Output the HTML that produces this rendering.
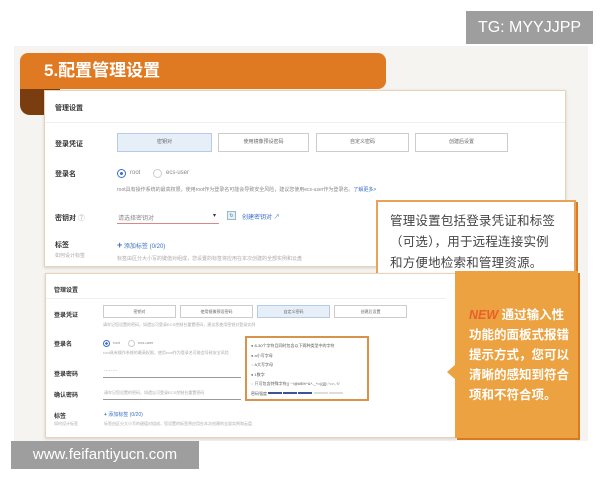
<!DOCTYPE html><html><head><meta charset="utf-8"><style>
*{margin:0;padding:0;box-sizing:border-box}
body{width:600px;height:480px;background:#fff;position:relative;overflow:hidden;font-family:"Liberation Sans","Noto Sans CJK SC",sans-serif;color:#333}
.a{position:absolute;white-space:nowrap}
.s{font-size:6px;color:#888}
.l{font-size:7px;font-weight:bold;color:#333}
.btn{position:absolute;border:1px solid #ccc;background:#fff;font-size:5px;color:#666;text-align:center}
.btn.on{background:#e6eef8;border-color:#b8cbe4}
</style></head><body>
<div class="a" style="left:466px;top:11px;width:127px;height:33px;background:#9e9e9e;color:#fff;font-size:16px;line-height:33px;text-align:center">TG: MYYJJPP</div>
<div class="a" style="left:14px;top:46px;width:574px;height:395px;background:#f6f4f1"></div>
<div class="a" style="left:20px;top:88px;width:40px;height:27px;background:#7a3d10;border-radius:0 0 0 10px"></div>
<div class="a" style="left:20px;top:53px;width:366px;height:36px;background:#e07a22;border-radius:8px 8px 8px 0;color:#fff;font-size:17px;font-weight:bold;line-height:36px;padding-left:24px">5.配置管理设置</div>
<!-- card 1 -->
<div class="a" style="left:44px;top:90px;width:522px;height:177px;background:#fff;border:1px solid #e8d3b8;box-shadow:0 1px 3px rgba(0,0,0,.15)"></div>
<div class="a l" style="left:55px;top:103px">管理设置</div>
<div class="a" style="left:45px;top:122px;width:520px;height:1px;background:#eee"></div>
<div class="a l" style="left:55px;top:139px">登录凭证</div>
<div class="btn on" style="left:117px;top:133px;width:95px;height:19px;line-height:17px">密钥对</div>
<div class="btn" style="left:218px;top:133px;width:91px;height:19px;line-height:17px">使用镜像预设密码</div>
<div class="btn" style="left:316px;top:133px;width:93px;height:19px;line-height:17px">自定义密码</div>
<div class="btn" style="left:415px;top:133px;width:93px;height:19px;line-height:17px">创建后设置</div>
<div class="a l" style="left:55px;top:169px">登录名</div>
<div class="a" style="left:117px;top:169px;width:9px;height:9px;border:1px solid #3a6fc4;border-radius:50%"><div style="margin:2px;width:3px;height:3px;border-radius:50%;background:#3a6fc4"></div></div>
<div class="a s" style="left:130px;top:170px">root</div>
<div class="a" style="left:153px;top:169px;width:9px;height:9px;border:1px solid #ccc;border-radius:50%"></div>
<div class="a s" style="left:166px;top:170px">ecs-user</div>
<div class="a s" style="left:117px;top:186px;font-size:5px">root具有操作系统的最高权限，使用root作为登录名可能会导致安全风险，建议您使用ecs-user作为登录名。<span style="color:#3a6fc4">了解更多&gt;</span></div>
<div class="a l" style="left:55px;top:213px">密钥对 <span style="color:#aaa;font-weight:normal">⑦</span></div>
<div class="a s" style="left:118px;top:213px">请选择密钥对</div>
<div class="a" style="left:117px;top:223px;width:102px;height:1px;background:#d88"></div>
<div class="a" style="left:213px;top:212px;font-size:6px">▾</div>
<div class="a" style="left:227px;top:211px;width:9px;height:9px;background:#e6eef8;border:1px solid #9bb;font-size:5px;color:#3a6fc4;text-align:center;line-height:8px">↻</div>
<div class="a s" style="left:242px;top:212px;color:#3a6fc4">创建密钥对 ↗</div>
<div class="a l" style="left:55px;top:240px">标签</div>
<div class="a s" style="left:55px;top:252px;font-size:5px;color:#aaa">如何设计标签</div>
<div class="a s" style="left:117px;top:240px;color:#3a6fc4"><b style="font-size:9px">+</b> 添加标签 (0/20)</div>
<div class="a s" style="left:117px;top:255px;font-size:5px;color:#aaa">标签由区分大小写的键值对组成，您设置的标签将应用在本次创建的全部实例和云盘</div>
<!-- callout 1 -->
<div class="a" style="left:376px;top:200px;width:200px;height:75px;background:#fff;border:2px solid #e9a25a;box-shadow:2px 2px 0 #e07a22"></div>
<div class="a" style="left:390px;top:211px;font-size:12.5px;line-height:21px;color:#444;letter-spacing:.2px">管理设置包括登录凭证和标签<br>（可选），用于远程连接实例<br>和方便地检索和管理资源。</div>
<!-- card 2 -->
<div class="a" style="left:45px;top:273px;width:412px;height:165px;background:#fff;border:1px solid #e8d3b8;box-shadow:0 1px 3px rgba(0,0,0,.15)"></div>
<div class="a l" style="left:54px;top:285px;font-size:6px">管理设置</div>
<div class="a" style="left:46px;top:298px;width:400px;height:1px;background:#eee"></div>
<div class="a l" style="left:54px;top:310px;font-size:6px">登录凭证</div>
<div class="btn" style="left:103px;top:305px;width:73px;height:13px;line-height:11px;font-size:4px">密钥对</div>
<div class="btn" style="left:180px;top:305px;width:73px;height:13px;line-height:11px;font-size:4px">使用镜像预设密码</div>
<div class="btn on" style="left:257px;top:305px;width:73px;height:13px;line-height:11px;font-size:4px">自定义密码</div>
<div class="btn" style="left:334px;top:305px;width:73px;height:13px;line-height:11px;font-size:4px">创建后设置</div>
<div class="a s" style="left:103px;top:322px;font-size:4px;color:#aaa">请牢记您设置的密码，如遗忘可登录ECS控制台重置密码，建议您使用密钥对登录实例</div>
<div class="a l" style="left:54px;top:339px;font-size:6px">登录名</div>
<div class="a" style="left:103px;top:340px;width:7px;height:7px;border:1px solid #3a6fc4;border-radius:50%;background:radial-gradient(#3a6fc4 35%,#fff 40%)"></div>
<div class="a s" style="left:113px;top:340px;font-size:4px">root</div>
<div class="a" style="left:128px;top:340px;width:7px;height:7px;border:1px solid #ccc;border-radius:50%"></div>
<div class="a s" style="left:138px;top:340px;font-size:4px">ecs-user</div>
<div class="a s" style="left:103px;top:350px;font-size:4px;color:#aaa">root具有操作系统的最高权限，使用root作为登录名可能会导致安全风险</div>
<div class="a l" style="left:54px;top:369px;font-size:6px">登录密码</div>
<div class="a s" style="left:104px;top:368px;font-size:5px">········</div>
<div class="a" style="left:103px;top:377px;width:138px;height:1px;background:#999"></div>
<div class="a l" style="left:54px;top:390px;font-size:6px">确认密码</div>
<div class="a s" style="left:104px;top:390px;font-size:4px;color:#aaa">请牢记您设置的密码，如遗忘可登录ECS控制台重置密码</div>
<div class="a" style="left:103px;top:399px;width:138px;height:1px;background:#999"></div>
<div class="a l" style="left:54px;top:411px;font-size:6px">标签</div>
<div class="a s" style="left:54px;top:421px;font-size:4px;color:#aaa">如何设计标签</div>
<div class="a s" style="left:104px;top:411px;font-size:5px;color:#3a6fc4"><b>+</b> 添加标签 (0/20)</div>
<div class="a s" style="left:104px;top:421px;font-size:4px;color:#aaa">标签由区分大小写的键值对组成，您设置的标签将应用在本次创建的全部实例和云盘</div>
<!-- tooltip -->
<div class="a" style="left:245px;top:336px;width:124px;height:65px;background:#fff;border:2px solid #d9924a;font-size:4px;color:#555;line-height:9.5px;padding:3px 4px">
<div><span style="color:#4a8a3a">●</span> 8-30个字符且同时包含以下两种类型中的字符</div>
<div><span style="color:#4a8a3a">●</span> a小写字母</div>
<div><span style="color:#aaa">○</span> A大写字母</div>
<div><span style="color:#4a8a3a">●</span> 1数字</div>
<div><span style="color:#aaa">○</span> 只可包含特殊字符()`~!@#$%^&amp;*-_+=|{}[]:;'&lt;&gt;,.?/</div>
<div>密码强度 <span style="display:inline-block;width:14px;height:2px;background:#3a5590;vertical-align:middle"></span> <span style="display:inline-block;width:14px;height:2px;background:#3a5590;vertical-align:middle"></span> <span style="display:inline-block;width:14px;height:2px;background:#3a5590;vertical-align:middle"></span> <span style="display:inline-block;width:14px;height:2px;background:#ddd;vertical-align:middle"></span> <span style="display:inline-block;width:14px;height:2px;background:#ddd;vertical-align:middle"></span></div>
</div>
<!-- orange panel -->
<div class="a" style="left:455px;top:271px;width:123px;height:167px;background:#eca240;box-shadow:2px 2px 0 #d97a1e"></div>
<div class="a" style="left:447px;top:364px;width:0;height:0;border-top:8px solid transparent;border-bottom:8px solid transparent;border-right:9px solid #eca240"></div>
<div class="a" style="left:469px;top:305px;font-size:12.5px;line-height:20px;color:#fff;font-weight:bold"><i style="color:#e8602a">NEW</i> 通过输入性<br>功能的面板式报错<br>提示方式，您可以<br>清晰的感知到符合<br>项和不符合项。</div>
<div class="a" style="left:11px;top:441px;width:188px;height:28px;background:#9e9e9e;color:#fff;font-size:15px;line-height:28px;text-align:center">www.feifantiyucn.com</div>
</body></html>
